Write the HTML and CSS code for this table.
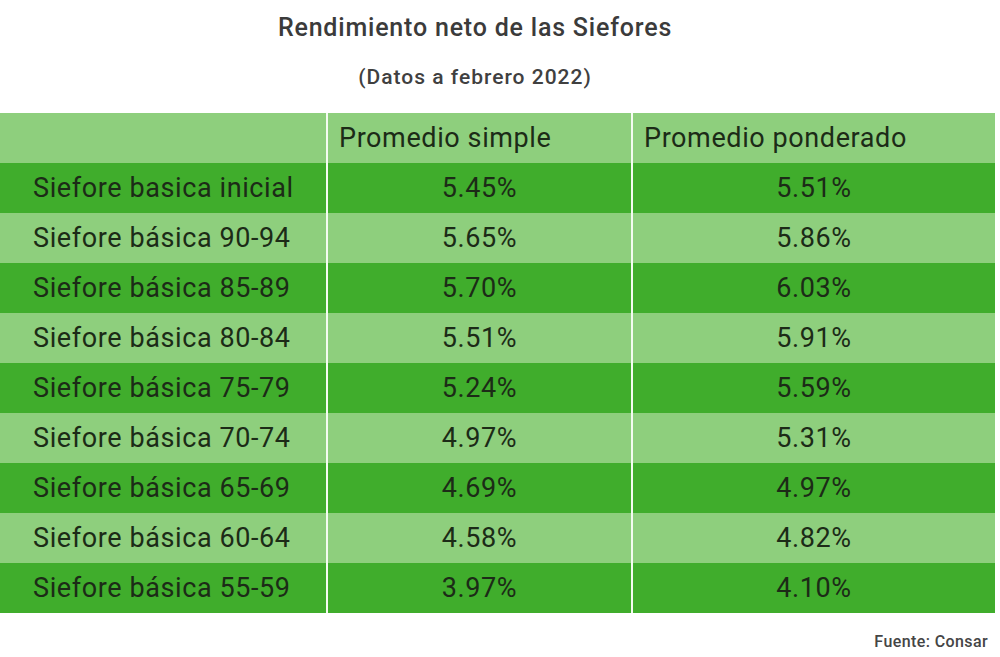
FILE: index.html
```html
<!DOCTYPE html>
<html lang="es">
<head>
<meta charset="utf-8">
<title>Rendimiento neto de las Siefores</title>
<link rel="stylesheet" href="styles.css">
</head>
<body>
<div class="page">
  <h1 class="title">Rendimiento neto de las Siefores</h1>
  <p class="subtitle">(Datos a febrero 2022)</p>
  <table class="data">
    <colgroup>
      <col class="c1"><col class="c2"><col class="c3">
    </colgroup>
    <thead>
      <tr class="light">
        <th></th>
        <th class="hl">Promedio simple</th>
        <th class="hl">Promedio ponderado</th>
      </tr>
    </thead>
    <tbody>
      <tr class="dark"><td class="name">Siefore basica inicial</td><td>5.45%</td><td>5.51%</td></tr>
      <tr class="light"><td class="name">Siefore básica 90-94</td><td>5.65%</td><td>5.86%</td></tr>
      <tr class="dark"><td class="name">Siefore básica 85-89</td><td>5.70%</td><td>6.03%</td></tr>
      <tr class="light"><td class="name">Siefore básica 80-84</td><td>5.51%</td><td>5.91%</td></tr>
      <tr class="dark"><td class="name">Siefore básica 75-79</td><td>5.24%</td><td>5.59%</td></tr>
      <tr class="light"><td class="name">Siefore básica 70-74</td><td>4.97%</td><td>5.31%</td></tr>
      <tr class="dark"><td class="name">Siefore básica 65-69</td><td>4.69%</td><td>4.97%</td></tr>
      <tr class="light"><td class="name">Siefore básica 60-64</td><td>4.58%</td><td>4.82%</td></tr>
      <tr class="dark"><td class="name">Siefore básica 55-59</td><td>3.97%</td><td>4.10%</td></tr>
    </tbody>
  </table>
  <p class="source">Fuente: Consar</p>
</div>
</body>
</html>
```

FILE: styles.css
```css
html, body {
  margin: 0;
  padding: 0;
  background: #ffffff;
}
body {
  font-family: Roboto, "Liberation Sans", Arial, sans-serif;
  color: #1f2d1a;
}
.page {
  width: 1000px;
  height: 657px;
  overflow: hidden;
}
.title {
  margin: 0;
  padding-top: 13px;
  height: 30px;
  line-height: 30px;
  font-size: 25px;
  font-weight: 500;
  letter-spacing: 0.8px;
  color: #3b3b3b;
  text-align: center;
  padding-right: 50px;
}
.subtitle {
  margin: 0;
  margin-top: 21px;
  height: 26px;
  line-height: 26px;
  font-size: 21px;
  font-weight: 500;
  letter-spacing: 1px;
  color: #404040;
  text-align: center;
  padding-right: 50px;
}
.data {
  margin-top: 23px;
  width: 995px;
  border-collapse: collapse;
  table-layout: fixed;
  font-size: 27px;
  letter-spacing: 0.6px;
}
.c1 { width: 327px; }
.c2 { width: 305px; }
.c3 { width: 363px; }
.data th, .data td {
  height: 50px;
  padding: 0;
  text-align: center;
  font-weight: 400;
  border-left: 2px solid #f4fbf1;
  color: #1c2b17;
}
.data th:first-child, .data td:first-child {
  border-left: none;
}
.data .hl {
  text-align: left;
  padding-left: 11px;
}
.data .name {
  text-align: left;
  padding-left: 33px;
}
.light { background: #8ecf7d; }
.dark { background: #40ad2c; }
.source {
  margin: 0;
  margin-top: 19px;
  text-align: right;
  padding-right: 12px;
  font-size: 16px;
  font-weight: 500;
  letter-spacing: 0.4px;
  color: #454545;
}
```
